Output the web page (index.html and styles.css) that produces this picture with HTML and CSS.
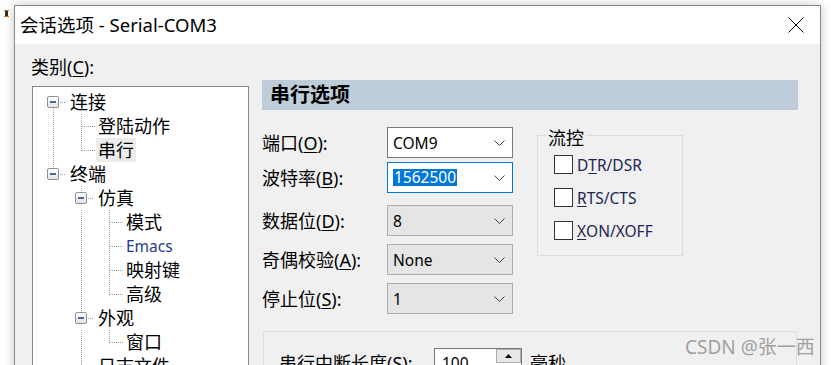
FILE: index.html
```html
<!DOCTYPE html>
<html lang="zh-CN">
<head>
  <meta charset="UTF-8">
  <meta name="viewport" content="width=device-width, initial-scale=1.0">
  <title>会话选项 - Serial-COM3</title>
  <link rel="stylesheet" href="styles.css">
</head>
<body>
  <!-- app icon peeking out behind the dialog -->
  <span class="app-icon">
    <svg width="5" height="7" viewBox="0 0 5 7"><rect x="0" y="0" width="5" height="1" fill="#c07020"/><rect x="1" y="1" width="3" height="5" fill="#3a2a1a"/><rect x="0" y="6" width="5" height="1" fill="#c07020"/></svg>
  </span>

  <div class="dialog">
    <div class="titlebar">
      <span class="title">会话选项 - Serial-COM3</span>
      <button class="close" aria-label="关闭">
        <svg width="16" height="16" viewBox="0 0 16 16"><path d="M.5.5l15 15M15.5.5l-15 15" stroke="#000" fill="none"/></svg>
      </button>
    </div>

    <div class="content">
      <!-- Category tree -->
      <div class="cat">
        <div class="cat-label">类别(<u>C</u>):</div>
        <div class="tree">
          <div class="node"><span class="tw exp dn"><span class="box"></span></span><span class="txt">连接</span></div>
          <div class="node"><span class="gd ln"></span><span class="tw mid"></span><span class="txt">登陆动作</span></div>
          <div class="node"><span class="gd ln"></span><span class="tw end"></span><span class="txt sel">串行</span></div>
          <div class="node"><span class="tw exp up"><span class="box"></span></span><span class="txt">终端</span></div>
          <div class="node"><span class="gd"></span><span class="tw exp up dn"><span class="box"></span></span><span class="txt">仿真</span></div>
          <div class="node"><span class="gd"></span><span class="gd ln"></span><span class="tw mid"></span><span class="txt">模式</span></div>
          <div class="node"><span class="gd"></span><span class="gd ln"></span><span class="tw mid"></span><span class="txt lat">Emacs</span></div>
          <div class="node"><span class="gd"></span><span class="gd ln"></span><span class="tw mid"></span><span class="txt">映射键</span></div>
          <div class="node"><span class="gd"></span><span class="gd ln"></span><span class="tw end"></span><span class="txt">高级</span></div>
          <div class="node"><span class="gd"></span><span class="tw exp up dn"><span class="box"></span></span><span class="txt">外观</span></div>
          <div class="node"><span class="gd"></span><span class="gd ln"></span><span class="tw end"></span><span class="txt">窗口</span></div>
          <div class="node"><span class="gd"></span><span class="tw mid"></span><span class="txt">日志文件</span></div>
        </div>
      </div>

      <!-- Serial options panel -->
      <div class="panel">
        <div class="panel-head">串行选项</div>

        <div class="panel-main">
          <div class="fields">
            <div class="field">
              <span class="field-label">端口(<u>O</u>):</span>
              <div class="combo edit"><span>COM9</span><svg width="11" height="6" viewBox="0 0 11 6"><path d="M.5.5l5 5 5-5" fill="none" stroke="#444"/></svg></div>
            </div>
            <div class="field near">
              <span class="field-label">波特率(<u>B</u>):</span>
              <div class="combo edit focus"><span class="hl">1562500</span><svg width="11" height="6" viewBox="0 0 11 6"><path d="M.5.5l5 5 5-5" fill="none" stroke="#444"/></svg></div>
            </div>
            <div class="field far">
              <span class="field-label">数据位(<u>D</u>):</span>
              <div class="combo"><span>8</span><svg width="11" height="6" viewBox="0 0 11 6"><path d="M.5.5l5 5 5-5" fill="none" stroke="#444"/></svg></div>
            </div>
            <div class="field">
              <span class="field-label">奇偶校验(<u>A</u>):</span>
              <div class="combo"><span>None</span><svg width="11" height="6" viewBox="0 0 11 6"><path d="M.5.5l5 5 5-5" fill="none" stroke="#444"/></svg></div>
            </div>
            <div class="field">
              <span class="field-label">停止位(<u>S</u>):</span>
              <div class="combo"><span>1</span><svg width="11" height="6" viewBox="0 0 11 6"><path d="M.5.5l5 5 5-5" fill="none" stroke="#444"/></svg></div>
            </div>
          </div>

          <fieldset class="flow">
            <legend>流控</legend>
            <div class="checks">
              <label class="check"><span class="cb"></span>D<u>T</u>R/DSR</label>
              <label class="check"><span class="cb"></span><u>R</u>TS/CTS</label>
              <label class="check"><span class="cb"></span><u>X</u>ON/XOFF</label>
            </div>
          </fieldset>
        </div>

        <div class="break-group">
          <span class="break-label">串行中断长度(<u>S</u>):</span>
          <div class="spin">
            <span class="spin-val">100</span>
            <span class="spin-btns"><span class="spin-up"><svg width="7" height="4" viewBox="0 0 7 4"><path d="M3.5 0L7 4H0z" fill="#000"/></svg></span></span>
          </div>
          <span class="unit">毫秒</span>
        </div>
      </div>
    </div>
  </div>

  <div class="watermark">CSDN @张一西</div>
</body>
</html>
```

FILE: styles.css
```css
* {
  box-sizing: border-box;
}

html, body {
  height: 365px;
  overflow: hidden;
}

body {
  margin: 0;
  padding: 5px 0 0 14px;
  background: #fff;
  font-family: "Noto Sans", "Noto Sans CJK SC", sans-serif;
  font-size: 18px;
  color: #000;
}

u {
  text-decoration-thickness: 1px;
  text-underline-offset: 2px;
}

/* Little icon behind the window */
.app-icon {
  position: absolute;
  left: 4px;
  top: 10px;
  line-height: 0;
}

/* Dialog window */
.dialog {
  width: 807px;
  height: 420px;
  border: 1px solid #888;
  border-bottom: 0;
  background: #f0f0f0;
  box-shadow: 0 0 10px rgba(0, 0, 0, 0.22);
}

.titlebar {
  height: 38px;
  background: #fff;
  display: flex;
  align-items: center;
  justify-content: space-between;
  padding-left: 5px;
}

.title {
  font-size: 18.5px;
  line-height: 24px;
}

.close {
  width: 16px;
  height: 16px;
  margin-right: 16px;
  padding: 0;
  border: 0;
  background: none;
  line-height: 0;
}

.content {
  display: flex;
}

/* Category column */
.cat {
  width: 234px;
  padding: 11px 0 0 17px;
}

.cat-label {
  line-height: 24px;
  margin-left: -1px;
}

.tree {
  width: 217px;
  height: 300px;
  margin-top: 7px;
  padding: 3px 0 0 14px;
  border: 1px solid #828790;
  background: #fff;
}

.node {
  display: flex;
  height: 24px;
}

.gd,
.tw {
  position: relative;
  flex: none;
  height: 24px;
}

.gd {
  width: 28px;
}

.tw {
  width: 23px;
}

/* dotted connector lines */
.gd.ln::before,
.tw::before {
  content: '';
  position: absolute;
  left: 6px;
  width: 1px;
  background-image: linear-gradient(to bottom, #a0a0a0 50%, transparent 50%);
  background-size: 1px 2px;
}

.gd.ln::before,
.tw.mid::before {
  top: 0;
  bottom: 0;
}

.tw.end::before {
  top: 0;
  height: 13px;
}

.tw.exp::before {
  display: none;
}

.tw.up::before {
  display: block;
  top: 0;
  height: 6px;
}

.tw.dn::before {
  display: block;
  top: 18px;
  bottom: 0;
}

.tw.up.dn::before {
  top: 0;
  bottom: 0;
}

.tw::after {
  content: '';
  position: absolute;
  top: 12px;
  left: 7px;
  width: 13px;
  height: 1px;
  background-image: linear-gradient(to right, #a0a0a0 50%, transparent 50%);
  background-size: 2px 1px;
}

.tw.exp::after {
  left: 13px;
  width: 6px;
}

.box {
  position: absolute;
  left: 0;
  top: 6px;
  width: 12px;
  height: 12px;
  border: 1px solid #919191;
  border-radius: 2px;
  background: linear-gradient(#fff, #e4e4e4);
}

.box::after {
  content: '';
  position: absolute;
  left: 2px;
  top: 4px;
  width: 6px;
  height: 2px;
  background: #4a64a6;
}

.txt {
  line-height: 24px;
  white-space: nowrap;
}

.txt.lat {
  font-size: 15.5px;
  color: #1f3a8a;
}

.txt.sel {
  background: #ececec;
  padding: 0 2px;
  margin-left: -2px;
}

/* Serial options panel */
.panel {
  width: 536px;
  margin-left: 13px;
  padding-top: 36px;
}

.panel-head {
  height: 30px;
  padding-left: 8px;
  background: #bfcddb;
  font-size: 20px;
  font-weight: 700;
  line-height: 30px;
}

.panel-main {
  display: flex;
  align-items: flex-start;
  margin-top: 17px;
}

.fields {
  display: flex;
  flex-direction: column;
  width: 251px;
}

.field {
  display: flex;
  align-items: center;
  height: 31px;
}

.field + .field {
  margin-top: 8px;
}

.field.near {
  margin-top: 4px;
}

.field.far {
  margin-top: 12px;
}

.field-label {
  width: 125px;
  line-height: 24px;
  white-space: nowrap;
}

.combo {
  width: 126px;
  height: 31px;
  display: flex;
  align-items: center;
  justify-content: space-between;
  padding: 0 7px 0 5px;
  border: 1px solid #adadad;
  background: #e5e5e5;
  font-size: 15.5px;
}

.combo.edit {
  border-color: #7a7a7a;
  background: #fff;
}

.combo.focus {
  border-color: #0078d7;
}

.hl {
  display: inline-block;
  padding: 0 1px;
  line-height: 17px;
  background: #0078d7;
  color: #fff;
}

/* Flow control group */
.flow {
  width: 146px;
  min-width: 0;
  margin: -5px 0 0 24px;
  padding: 0 0 15px 16px;
  border: 1px solid #dcdcdc;
}

.flow legend {
  margin-left: -8px;
  padding: 6px 2px 0;
  line-height: 20px;
}

.checks {
  margin-top: 7px;
}

.check {
  display: flex;
  align-items: center;
  height: 19px;
  font-size: 15.5px;
  color: #1c2550;
  white-space: nowrap;
}

.check + .check {
  margin-top: 14px;
}

.cb {
  width: 19px;
  height: 19px;
  margin-right: 4px;
  border: 1px solid #333;
  background: #fff;
}

/* Break length group */
.break-group {
  width: 534px;
  height: 60px;
  margin: 17px 0 0 1px;
  padding: 16px 0 0 15px;
  display: flex;
  align-items: flex-start;
  border: 1px solid #dcdcdc;
}

.break-label {
  width: 155px;
  line-height: 30px;
  white-space: nowrap;
}

.spin {
  width: 88px;
  height: 30px;
  display: flex;
  border: 1px solid #7a7a7a;
  background: #fff;
}

.spin-val {
  flex: 1;
  padding-left: 7px;
  font-size: 15.5px;
  line-height: 28px;
}

.spin-btns {
  width: 25px;
}

.spin-up {
  height: 14px;
  display: flex;
  align-items: center;
  justify-content: center;
  border: 1px solid #adadad;
  background: #e8e8e8;
}

.unit {
  margin-left: 8px;
  line-height: 30px;
}

/* Watermark over the screenshot */
.watermark {
  position: absolute;
  left: 685px;
  top: 335px;
  font-size: 19px;
  line-height: 24px;
  color: #a0a0a0;
  white-space: nowrap;
}
```
